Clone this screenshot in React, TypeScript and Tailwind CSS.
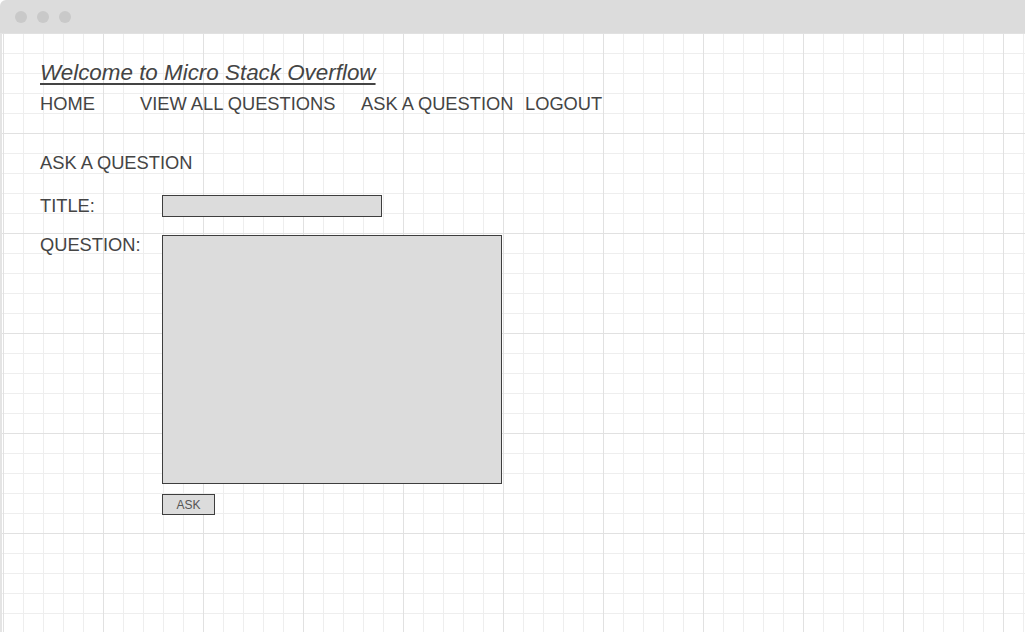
import React from 'react';

// ============== WINDOW FRAME ==============

function TitleBar() {
  return (
    <div className="h-[33px] shrink-0 bg-[#dcdcdc] rounded-tl-[6px] flex items-center pl-[15px] gap-[10px]">
      <span className="w-[12px] h-[12px] rounded-full bg-[#c9c9c9]" />
      <span className="w-[12px] h-[12px] rounded-full bg-[#c9c9c9]" />
      <span className="w-[12px] h-[12px] rounded-full bg-[#c9c9c9]" />
    </div>
  );
}

// ============== ASK FORM ==============

function AskForm() {
  return (
    <div className="flex flex-col">
      <h2 className="mt-[37px] text-[18.3px] leading-[22px] font-normal">ASK A QUESTION</h2>

      <div className="mt-[20px] flex items-start">
        <label className="w-[122px] pt-[1px] text-[18.3px] leading-[22px]">TITLE:</label>
        <input
          type="text"
          className="mt-[1px] w-[220px] h-[22px] bg-[#dcdcdc] border border-[#3e3e3e] outline-none"
        />
      </div>

      <div className="mt-[16px] flex items-start">
        <label className="w-[122px] pt-[1px] text-[18.3px] leading-[22px]">QUESTION:</label>
        <div className="flex flex-col mt-[2px]">
          <textarea className="w-[340px] h-[249px] bg-[#dcdcdc] border border-[#3e3e3e] resize-none outline-none" />
          <button className="mt-[10px] w-[53px] h-[21px] bg-[#dcdcdc] border border-[#3e3e3e] text-[12px] leading-none text-[#555] flex items-center justify-center">
            ASK
          </button>
        </div>
      </div>
    </div>
  );
}

// ============== APP ==============

export default function App() {
  return (
    <div className="h-[632px] w-[1025px] overflow-hidden bg-white flex flex-col font-['Liberation_Sans',Arial,sans-serif] text-[#444]">
      <TitleBar />
      <div className="flex-1 border-l-2 border-[#e4e4e4] pl-[38px] pt-[27px] [background-image:linear-gradient(to_right,#e1e1e1_1px,transparent_1px),linear-gradient(to_bottom,#e1e1e1_1px,transparent_1px),linear-gradient(to_right,#eeeeee_1px,transparent_1px),linear-gradient(to_bottom,#eeeeee_1px,transparent_1px)] [background-size:100px_100px,100px_100px,20px_20px,20px_20px] [background-position:1px_0,1px_0,1px_0,1px_0]">
        <h1 className="text-[22.4px] leading-[26px] italic underline decoration-[2px] underline-offset-[3px] font-normal">
          Welcome to Micro Stack Overflow
        </h1>

        <nav className="mt-[7px] flex text-[18.3px] leading-[22px]">
          <a className="w-[100px]">HOME</a>
          <a className="w-[221px]">VIEW ALL QUESTIONS</a>
          <a className="w-[164px]">ASK A QUESTION</a>
          <a>LOGOUT</a>
        </nav>

        <AskForm />
      </div>
    </div>
  );
}
